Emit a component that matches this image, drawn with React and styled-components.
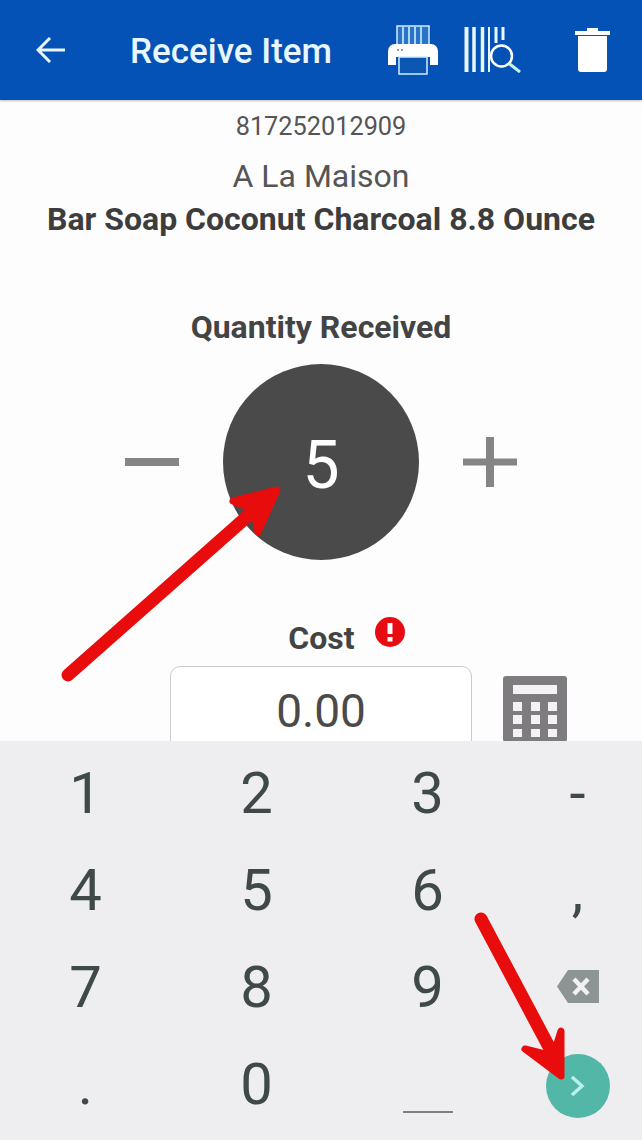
import React from 'react';
import styled, { createGlobalStyle } from 'styled-components';

const GlobalStyle = createGlobalStyle`
    html, body {
        margin: 0;
        padding: 0;
        background: #fdfdfd;
    }
    body {
        font-family: Roboto, "Liberation Sans", sans-serif;
    }
`;

const Screen = styled.div`
    width: 642px;
    height: 1140px;
    position: relative;
    display: flex;
    flex-flow: column;
    overflow: hidden;
    background: #fdfdfd;
`;

const Toolbar = styled.header`
    height: 100px;
    flex: none;
    display: flex;
    align-items: center;
    background: #0452b5;
    color: #fff;
    box-shadow: 0 1px 2px rgba(0, 0, 0, .25);
    padding-left: 36px;
`;
const Title = styled.h1`
    margin: 2px 0 0 65px;
    width: 258px;
    font-size: 35px;
    font-weight: 500;
    color: #e8f6ff;
    white-space: nowrap;
`;
const ToolIcon = styled.svg`
    display: block;
    flex: none;
    margin-left: ${props => props.$gap}px;
`;

const Content = styled.main`
    flex: 1;
    min-height: 0;
    display: flex;
    flex-flow: column;
    align-items: center;
    overflow: hidden;
    color: #444;
    text-align: center;
`;
const Upc = styled.div`
    margin-top: 12px;
    font-size: 25.3px;
    line-height: 30px;
    color: #555;
`;
const Brand = styled.div`
    margin-top: 17px;
    font-size: 32px;
    line-height: 34px;
    color: #555;
`;
const ItemName = styled.div`
    margin-top: 9px;
    font-size: 32px;
    line-height: 34px;
    font-weight: 700;
    color: #3d3d3d;
    white-space: nowrap;
`;
const FieldLabel = styled.div`
    display: flex;
    align-items: center;
    font-size: 32px;
    line-height: 34px;
    font-weight: 700;
    color: #444;
`;
const QuantityLabel = styled(FieldLabel)`
    margin-top: 74px;
`;
const Stepper = styled.div`
    margin-top: 20px;
    display: flex;
    align-items: center;
    gap: 44px;
`;
const Quantity = styled.div`
    width: 196px;
    height: 196px;
    box-sizing: border-box;
    padding-top: 6px;
    border-radius: 50%;
    background: #4a4a4a;
    color: #fff;
    display: flex;
    align-items: center;
    justify-content: center;
    font-size: 66px;
`;
const CostLabel = styled(FieldLabel)`
    margin-top: 61px;
    padding-left: 51px;
    gap: 20px;
`;
const Alert = styled.svg`
    display: block;
    margin-top: -12px;
`;
const CostRow = styled.div`
    margin-top: 11px;
    margin-left: 95px;
    display: flex;
    align-items: flex-start;
    gap: 31px;
`;
const CostInput = styled.div`
    width: 302px;
    height: 90px;
    box-sizing: border-box;
    border: 1.5px solid #cbcbcb;
    border-radius: 10px;
    background: #fff;
    font-size: 46px;
    line-height: 88px;
    color: #4a4a4a;
`;
const Calculator = styled.svg`
    display: block;
    margin-top: 10px;
`;

const Keyboard = styled.section`
    height: 399px;
    flex: none;
    box-sizing: border-box;
    padding-top: 3px;
    display: grid;
    grid-template-columns: 171px 171px 171px 129px;
    grid-auto-rows: 97px;
    background: #eeeef0;
    color: #3f4a48;
`;
const Key = styled.div`
    display: flex;
    align-items: center;
    justify-content: center;
    font-size: 58px;
    font-weight: 400;
`;
const SpaceBar = styled.div`
    width: 50px;
    height: 2px;
    margin-top: 57px;
    background: #7c8280;
`;
const Enter = styled.div`
    flex: none;
    width: 64px;
    height: 64px;
    border-radius: 50%;
    background: #52b7a6;
    display: flex;
    align-items: center;
    justify-content: center;
    margin-top: 4px;
`;

// call-out arrows sit over everything else
const Arrows = styled.svg`
    position: absolute;
    left: 0;
    top: 0;
    pointer-events: none;
`;

const Printer = () => (
    <ToolIcon $gap={0} width="50" height="50" viewBox="0 0 50 50">
        <rect x="9" y="1" width="32" height="22" fill="#2a73c6" stroke="#cfeeff" strokeWidth="1.5" />
        <path d="M15 2v20M21 2v20M27 2v20M33 2v20" stroke="#a9d8f5" strokeWidth="2" />
        <path d="M7 19h36a7 7 0 0 1 7 7v14h-8v-8H8v8H0V26a7 7 0 0 1 7-7z" fill="#fff" />
        <rect x="11" y="32" width="28" height="17" fill="#0b57b3" stroke="#cfeeff" strokeWidth="1.5" />
        <path d="M9 25h2M13 25h2" stroke="#8aa" strokeWidth="2" />
    </ToolIcon>
);

const BarcodeSearch = () => (
    <ToolIcon $gap={25} width="58" height="46" viewBox="0 0 58 46">
        <path d="M3.500 0v45" stroke="#e6f7ff" fill="none" strokeWidth="4" />
        <path d="M11 0v45M19.500 0v45" stroke="#e6f7ff" fill="none" strokeWidth="3.500" />
        <path d="M26 0v45" stroke="#e6f7ff" fill="none" strokeWidth="2" />
        <path d="M33 0v16M40 0v13" stroke="#e6f7ff" strokeWidth="3" fill="none" />
        <circle cx="38.500" cy="29" r="10.500" fill="#0452b5" stroke="#fff" strokeWidth="2.500" />
        <path d="M46 36.500 57 45" stroke="#c9f2ea" strokeWidth="3" fill="none" />
    </ToolIcon>
);

const Trash = () => (
    <ToolIcon $gap={54} width="35" height="44" viewBox="0 0 35 44">
        <path d="M0 3h12V0h11v3h12v4H0z" fill="#fff" />
        <path d="M3 8h29v33a3 3 0 0 1-3 3H6a3 3 0 0 1-3-3z" fill="#fff" />
    </ToolIcon>
);

const KEYS = ['1', '2', '3', '-', '4', '5', '6', ',', '7', '8', '9', 'back', '.', '0', 'space', 'enter'];

const renderKey = (key) => {
    if (key === 'enter') {
        return (
            <Key key={key}>
                <Enter>
                    <svg width="18" height="24" viewBox="0 0 18 24">
                        <path d="M3 3l10 9-10 9" fill="none" stroke="#b8f0ea" strokeWidth="3.500" />
                    </svg>
                </Enter>
            </Key>
        );
    }
    if (key === 'back') {
        return (
            <Key key={key}>
                <svg width="42" height="33" viewBox="0 0 42 33">
                    <path d="M11 0h31v33H11L0 16.500z" fill="#8d9494" />
                    <path d="M17 9l14 15M31 9 17 24" stroke="#f1f1f3" strokeWidth="4.500" />
                </svg>
            </Key>
        );
    }
    if (key === 'space') {
        return <Key key={key}><SpaceBar /></Key>;
    }
    return <Key key={key}>{key}</Key>;
};

const App = () => (
    <Screen>
        <GlobalStyle />
        <Toolbar>
            <svg width="29" height="26" viewBox="0 0 29 26" style={{ flex: 'none' }}>
                <path d="M29 13H2M14 1 2 13l12 12" fill="none" stroke="#e8f6ff" strokeWidth="3" />
            </svg>
            <Title>Receive Item</Title>
            <Printer />
            <BarcodeSearch />
            <Trash />
        </Toolbar>
        <Content>
            <Upc>817252012909</Upc>
            <Brand>A La Maison</Brand>
            <ItemName>Bar Soap Coconut Charcoal 8.8 Ounce</ItemName>
            <QuantityLabel>Quantity Received</QuantityLabel>
            <Stepper>
                <svg width="54" height="54" viewBox="0 0 54 54">
                    <path d="M0 27h54" stroke="#858585" strokeWidth="8" />
                </svg>
                <Quantity>5</Quantity>
                <svg width="54" height="54" viewBox="0 0 54 54">
                    <path d="M0 27h54" stroke="#858585" strokeWidth="7" />
                    <path d="M27 2v50" stroke="#858585" strokeWidth="8" />
                </svg>
            </Stepper>
            <CostLabel>
                Cost
                <Alert width="30" height="30" viewBox="0 0 30 30">
                    <circle cx="15" cy="15" r="15" fill="#e90b12" />
                    <path d="M15 6v11" stroke="#fff" strokeWidth="5" />
                    <rect x="12.500" y="20" width="5" height="4.500" fill="#fff" />
                </Alert>
            </CostLabel>
            <CostRow>
                <CostInput>0.00</CostInput>
                <Calculator width="64" height="66" viewBox="0 0 64 66">
                    <rect width="64" height="66" rx="3" fill="#7f7c80" />
                    <rect x="10" y="9" width="44" height="9" fill="#f4f2f4" />
                    <path d="M10 26h9v9h-9zM28 26h9v9h-9zM45 26h9v9h-9zM10 39h9v9h-9zM28 39h9v9h-9zM45 39h9v9h-9zM10 53h9v8h-9zM28 53h9v8h-9zM45 53h9v8h-9z" fill="#f4f2f4" />
                </Calculator>
            </CostRow>
        </Content>
        <Keyboard>{KEYS.map(renderKey)}</Keyboard>
        <Arrows width="642" height="1140" viewBox="0 0 642 1140">
            <g fill="#e80c0c" stroke="#e80c0c" strokeLinecap="round" strokeLinejoin="round">
                <path d="M68 675 258 507" fill="none" strokeWidth="13" />
                <path d="M233 501 277 490 258 532 254 510z" strokeWidth="7" />
                <path d="M481 919 556 1060" fill="none" strokeWidth="13" />
                <path d="M561 1031 561 1076 525 1049 553 1056z" strokeWidth="7" />
            </g>
        </Arrows>
    </Screen>
);

export default App;
